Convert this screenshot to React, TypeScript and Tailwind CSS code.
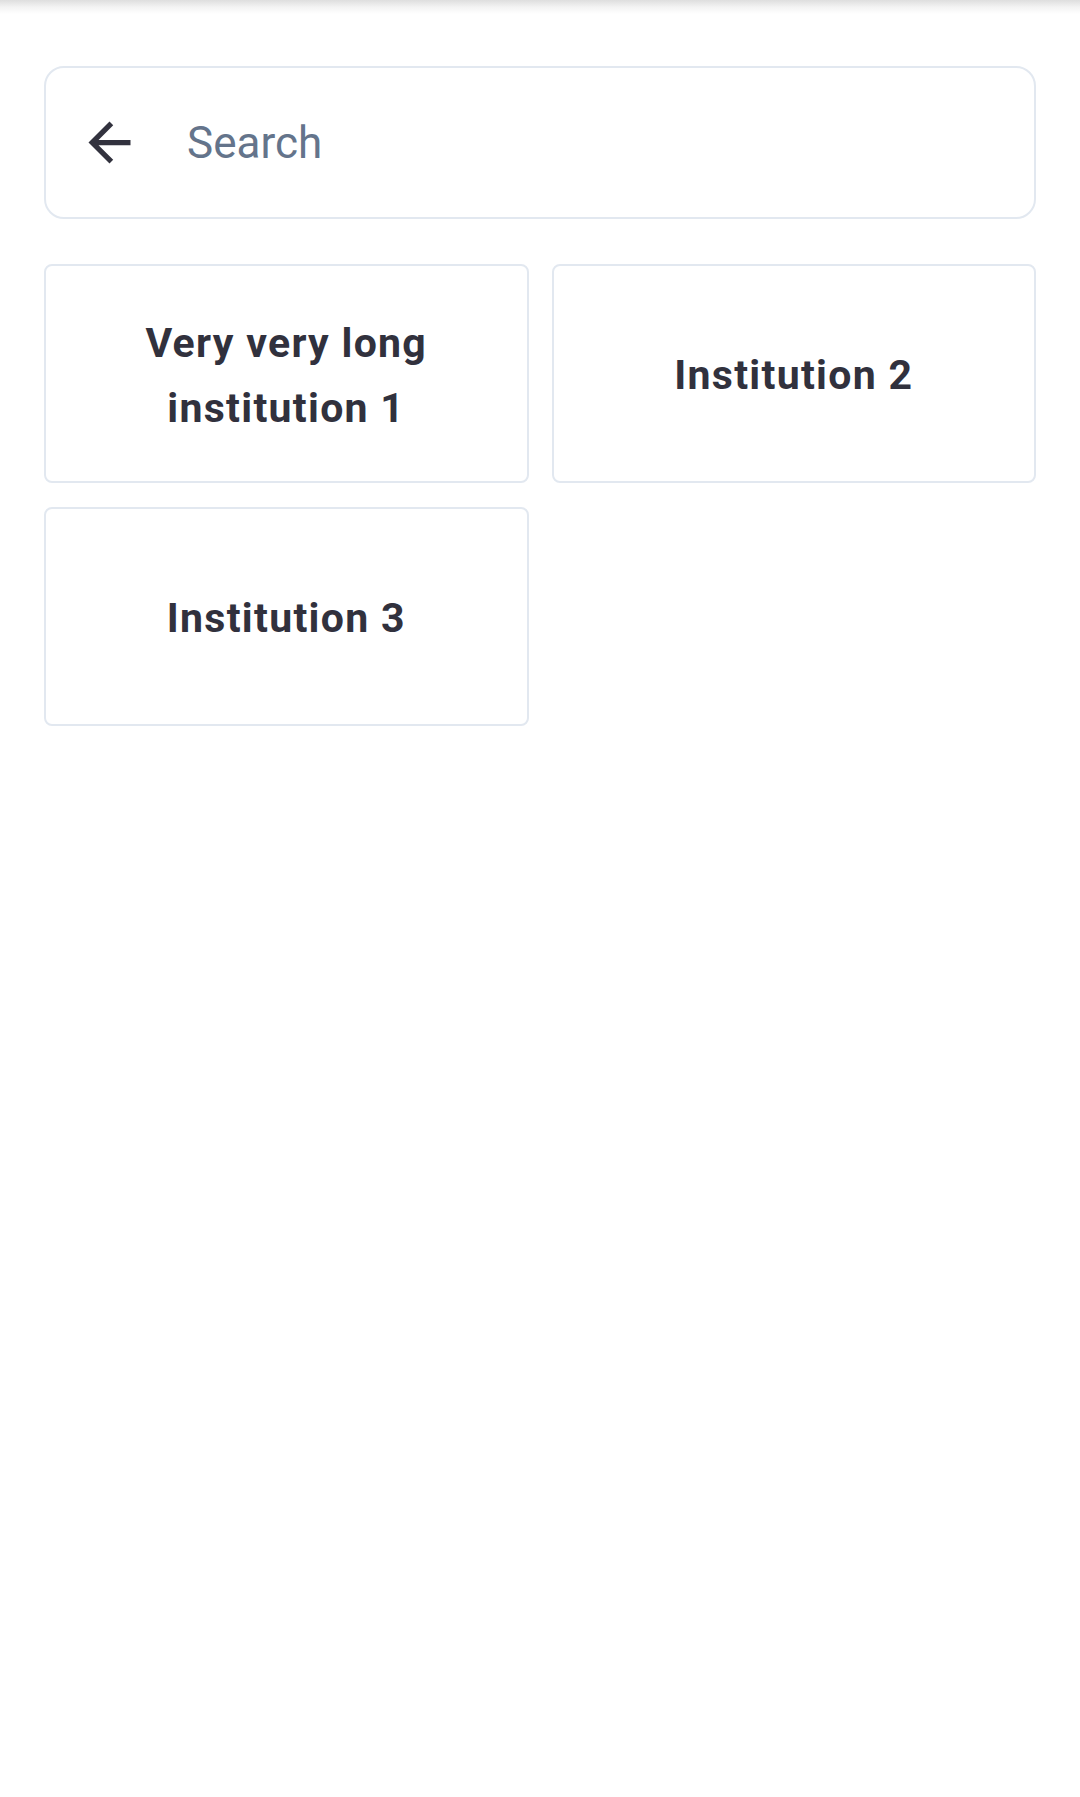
import React from "react";

function BackArrow() {
  return (
    <svg width="63" height="63" viewBox="0 0 24 24" className="shrink-0" aria-hidden="true">
      <path
        d="M20 11H7.83l5.59-5.59L12 4l-8 8 8 8 1.41-1.41L7.83 13H20v-2z"
        fill="#32323e"
      />
    </svg>
  );
}

const institutions = ["Very very long institution 1", "Institution 2", "Institution 3"];

export default function App() {
  return (
    <div
      className="min-h-screen w-full bg-white"
      style={{ fontFamily: "Roboto, 'Noto Sans', sans-serif" }}
    >
      <div className="h-[14px] w-full bg-gradient-to-b from-[#dedede] via-[#f3f3f3] to-white" />
      <div className="px-[44px] pt-[52px]">
        <div className="flex h-[153px] items-center rounded-[20px] border-2 border-[#e2e8f0] bg-white pl-[32px]">
          <BackArrow />
          <span className="ml-[46px] text-[44px] leading-none text-[#64748b]">Search</span>
        </div>
        <div className="mt-[45px] grid grid-cols-2 gap-x-[23px] gap-y-[24px]">
          {institutions.map((name) => (
            <div
              key={name}
              className="flex h-[219px] items-center justify-center rounded-[8px] border-2 border-[#e2e8f0] bg-white px-[40px] pt-[4px] text-center"
            >
              <span className="text-[41px] font-bold leading-[65px] tracking-[1.3px] text-[#31313d]">{name}</span>
            </div>
          ))}
        </div>
      </div>
    </div>
  );
}
